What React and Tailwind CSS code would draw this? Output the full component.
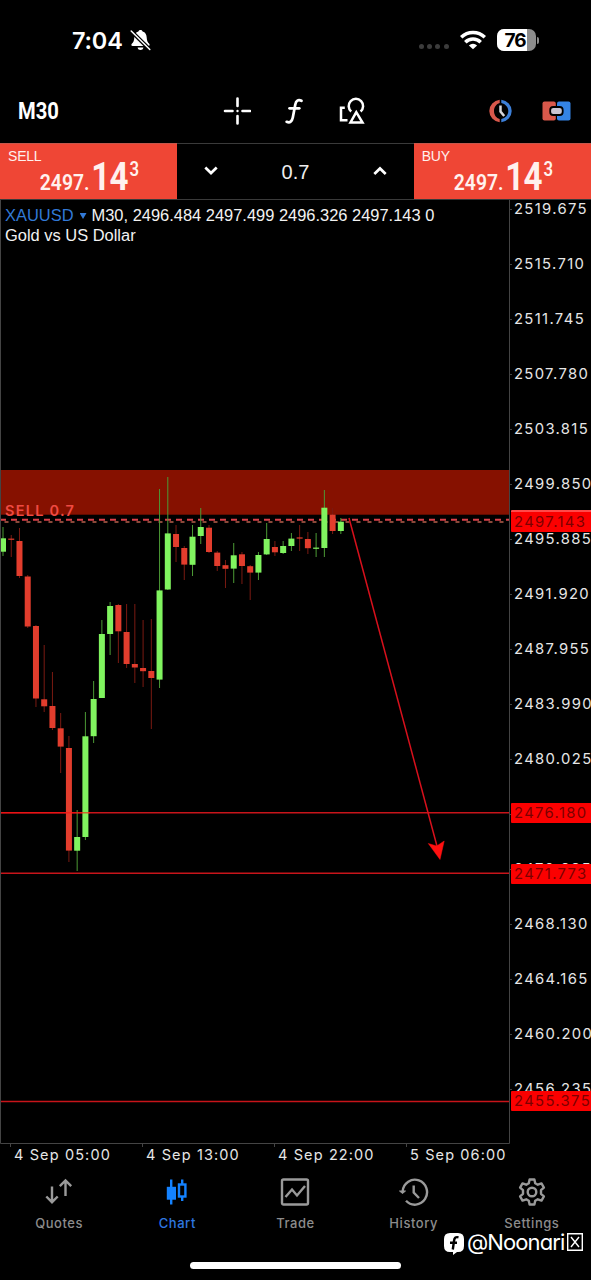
import React from 'react';

// the 2476.060 step is left blank, the 2476.180 tag sits right on it
const PRICES = [
    '2519.675', '2515.710', '2511.745', '2507.780', '2503.815', '2499.850', '2495.885', '2491.920', '2487.955',
    '2483.990', '2480.025', '', '2472.095', '2468.130', '2464.165', '2460.200', '2456.235',
];

const TIMES = ['4 Sep 05:00', '4 Sep 13:00', '4 Sep 22:00', '5 Sep 06:00'];

// [up, body top, body bottom, high, low] in chart pixels, counted from the top of the screen
const CANDLES = [
    [1, 538.3, 551.7, 527, 556], [0, 538.6, 539.8, 535, 557], [0, 541, 576, 528, 578], [0, 576.5, 626.5, 575, 628],
    [0, 626, 698.5, 625, 707], [0, 699.3, 706.3, 645, 712], [0, 706, 728, 672, 730], [0, 728.3, 746.6, 713, 773],
    [0, 748, 850.6, 736, 862], [1, 837, 850.7, 810, 871], [1, 736.3, 837, 712, 840], [1, 699, 736.2, 681, 743],
    [1, 634, 698, 620, 698], [1, 606, 634, 602, 655], [0, 605, 631.3, 604, 663], [0, 632, 664, 604, 668],
    [0, 664, 667.5, 604, 683], [0, 668, 671.2, 620, 687], [0, 671, 678, 619, 729], [1, 590.4, 679.6, 489, 688],
    [1, 533.4, 589.5, 477, 590], [0, 534, 547, 525, 562], [0, 548, 564.6, 546, 580], [1, 536.7, 564.8, 525, 576],
    [1, 527, 536, 508, 544], [0, 527.7, 552, 525, 553], [0, 552.6, 566, 551, 571], [0, 565.2, 568.8, 560, 588],
    [1, 555.3, 568.6, 543, 583], [0, 554.3, 566, 552, 584], [0, 566.2, 572.6, 565, 600], [1, 555, 572.6, 552, 580],
    [1, 539, 554.4, 523, 555], [0, 547, 552.3, 541, 556], [1, 546, 553, 541, 554], [1, 538.6, 546, 533, 551],
    [0, 537.4, 538.6, 525, 551], [0, 539, 548.2, 532, 554], [1, 547.6, 548.8, 533, 557], [1, 507.7, 548, 490, 557],
    [0, 514.6, 531, 508, 534], [1, 521.7, 531, 518, 534],
];

const LEVELS = [812.8, 873.3, 1101.4];

const StatusBar = () => (
    <div className="h-[80px] flex items-center justify-between pl-[72px] pr-[52px] shrink-0">
        <div className="flex items-center gap-[7px]">
            <span className="text-[23.5px] font-semibold tracking-[-0.2px] leading-none mt-[2px]">7:04</span>
            <svg width="21" height="22" viewBox="0 0 21 22" fill="#fff">
                <path d="M10.500 1C9.300 1 8.600 1.700 8.400 2.500C5.600 3.300 4.400 5.500 4.300 8.500C4.200 12 3.200 13.300 1.800 14.800C1 15.800 1.300 17 2.600 17H18.400C19.700 17 20 15.800 19.200 14.800C17.800 13.300 16.800 12 16.700 8.500C16.600 5.500 15.400 3.300 12.600 2.500C12.400 1.700 11.700 1 10.500 1Z" />
                <path d="M7.600 18.500H13.400C13 20.300 12 21 10.500 21S8 20.300 7.600 18.500Z" />
                <path d="M1 2L20 20.700" stroke="#000" strokeWidth="4" />
                <path d="M1.200 2L19.800 20.500" stroke="#fff" strokeWidth="1.500" strokeLinecap="round" />
            </svg>
        </div>
        <div className="flex items-center">
            <div className="flex gap-[3.200px] mt-[13px] mr-[11px]">
                {[0, 1, 2, 3].map(i => <i key={i} className="w-[5px] h-[5px] rounded-full bg-[#3c3c3c]" />)}
            </div>
            <svg width="26" height="20" viewBox="0 0 26 20" fill="none" stroke="#fff" strokeWidth="3.500">
                <path d="M1.200 7.300A17 17 0 0 1 24.800 7.300" />
                <path d="M5.300 12.200A11 11 0 0 1 20.700 12.200" />
                <path d="M13 19.300L8.900 15.400A6 6 0 0 1 17.100 15.400Z" fill="#fff" stroke="none" />
            </svg>
            <div className="ml-[11px] w-[39px] h-[22px] rounded-[7px] overflow-hidden bg-[#8c8c8c] flex">
                <div className="w-[30px] bg-white text-black text-[19px] font-bold leading-[23px] pl-[8px] tracking-[-1px] whitespace-nowrap">76</div>
            </div>
            <div className="ml-[1.500px] w-[2px] h-[7px] rounded-r-full bg-[#8c8c8c]" />
        </div>
    </div>
);

const Toolbar = () => (
    <div className="h-[62px] flex items-center pl-[18px] pr-[20px] shrink-0">
        <div className="w-[205px] pt-[2px]">
            <span className="inline-block origin-left scale-x-[0.860] font-['Roboto'] font-bold text-[23.500px] leading-none">M30</span>
        </div>
        <svg width="28" height="28" viewBox="0 0 28 28" stroke="#fff" strokeWidth="2.600" strokeLinecap="round">
            <path d="M14.500 1.500V9M14.500 19V26.500M2 14H9.500M19.500 14H27" />
            <circle cx="14.500" cy="14" r="1.200" fill="#fff" stroke="none" />
        </svg>
        <svg className="ml-[33px]" width="20" height="28" viewBox="0 0 20 28" fill="none" stroke="#fff" strokeWidth="2.700" strokeLinecap="round">
            <path d="M17.500 3.800C14.200 2.200 12 3.700 11.300 7.500L8.800 20.500C8 24.600 6 26.200 2.600 24.800" />
            <path d="M5.500 11.300H15.300" />
        </svg>
        <svg className="ml-[34px]" width="28" height="28" viewBox="0 0 28 28" fill="none" stroke="#fff" strokeWidth="2.500">
            <path d="M6.800 10.800H3V23.300H9.500" />
            <path d="M13.200 14.500A7.200 7.200 0 1 1 22.600 14.500" />
            <path d="M18.300 15.200L12.500 25.500H24.500Z" />
        </svg>
        <svg className="ml-auto" width="30" height="26" viewBox="0 0 30 26" fill="none">
            <path d="M13.700 1.800A12 11.300 0 0 0 13.700 24.200V21C10.300 20 8 17 8 13S10.300 6 13.700 5Z" fill="#d9584b" />
            <path d="M15.300 1.800A12 11.300 0 0 1 15.300 24.200V21C19.500 20 22.300 17 22.300 13S19.500 6 15.300 5Z" fill="#3c7fd8" />
            <path d="M14.500 7.500V13.500L18.200 18" stroke="#d8d8dc" strokeWidth="2.500" />
        </svg>
        <svg className="ml-[26px]" width="29" height="20" viewBox="0 0 29 20">
            <rect x="0.500" y="0.500" width="13.300" height="19" rx="2" fill="#d9584b" />
            <rect x="15" y="0.500" width="13.500" height="19" rx="2" fill="#3484e6" />
            <rect x="8.200" y="6" width="12.500" height="8" rx="3" fill="#c9c5d2" stroke="#000" strokeWidth="1.800" />
        </svg>
    </div>
);

const PriceButton = ({ label }) => (
    <div className="w-[177.300px] h-[56px] bg-[#ef4635] border-t border-[#c5574b] pl-[8px] text-[#fff1ee]">
        <div className="text-[14px] leading-[16px] pt-[4px] font-['Liberation_Sans'] tracking-[-0.200px]">{label}</div>
        <div className="pl-[37px] h-[34px] flex items-baseline origin-left scale-x-[0.860] font-['Roboto'] leading-[30px] -mt-[2px] whitespace-nowrap">
            <span className="text-[22.500px] font-semibold">2497.</span>
            <span className="text-[38.500px] font-bold tracking-[-0.800px] ml-[2px]">14</span>
            <span className="text-[19.500px] font-semibold relative -top-[14px] ml-[2px]">3</span>
        </div>
    </div>
);

const TradePanel = () => (
    <div className="h-[58px] flex pt-px border-b border-[#3a3a3a] shrink-0">
        <PriceButton label="SELL" />
        <div className="flex-1 h-[56px] border-t border-[#3a3a3a] flex items-center justify-between px-[27px]">
            <svg width="14" height="10" viewBox="0 0 14 10" fill="none" stroke="#fff" strokeWidth="2.700" className="-mt-[2px]"><path d="M1.300 1.500L7 7L12.700 1.500" /></svg>
            <span className="font-['Liberation_Sans'] text-[20px] text-[#eee]">0.7</span>
            <svg width="14" height="10" viewBox="0 0 14 10" fill="none" stroke="#fff" strokeWidth="2.700" className="-mt-[2px]"><path d="M1.300 8L7 2.500L12.700 8" /></svg>
        </div>
        <PriceButton label="BUY" />
    </div>
);

const Drawing = () => (
    <svg className="block" width="510" height="944" viewBox="0 200 510 944">
        <rect x="0" y="470" width="509" height="44.700" fill="#861100" />
        {LEVELS.map(y => <path key={y} d={`M0 ${y}H509`} stroke="#c8141a" strokeWidth="1.500" />)}
        <path d="M0 519.800H509" stroke="#d9404a" strokeWidth="2" strokeDasharray="6 5" />
        <path d="M4.500 521.900H509" stroke="#b8604c" strokeWidth="1.500" strokeDasharray="4 7" />
        {CANDLES.map(([up, top, bottom, high, low], i) => {
            const x = 3 + i * 8.24;
            return (
                <g key={i}>
                    <path d={`M${x} ${high}V${low}`} stroke={up ? '#4c9a35' : '#7a1a12'} strokeWidth="1" />
                    <rect x={x - 3} y={top} width="6" height={bottom - top} fill={up ? '#80f45f' : '#e23d2d'} />
                </g>
            );
        })}
        <path d="M0 812.800H90" stroke="#ff1010" strokeOpacity="0.600" strokeWidth="1.500" />
        <path d="M349 518L437.500 848" stroke="#d8101c" strokeWidth="1.500" />
        <path d="M428.300 843.500L436.700 846L444.200 841L440 859.500Z" fill="#ff1010" stroke="#ff1010" strokeWidth="0.500" />
        <path d="M0.500 200V1143.500H509.500V200" fill="none" stroke="#444" />
    </svg>
);

const PriceTag = ({ className, children }) => (
    <div className={`absolute left-[1px] right-0 bg-[#fb0000] rounded-[1px] pl-[3px] leading-[20px] text-[#7c0000] ${className}`}>{children}</div>
);

const ChartArea = () => (
    <div className="h-[944px] flex shrink-0 overflow-hidden">
        <div className="relative w-[510px] shrink-0">
            <Drawing />
            <div className="absolute top-[5px] left-[5px] font-['Liberation_Sans'] text-[16.450px] leading-[20px] text-[#f2f2f2] whitespace-nowrap">
                <div>
                    <span className="text-[#3279d6]">XAUUSD</span>
                    <span className="inline-block w-[7px] h-[6px] ml-[6px] mr-[5px] mb-[2px] bg-[#3279d6] [clip-path:polygon(0_0,100%_0,50%_100%)]" />
                    M30, 2496.484 2497.499 2496.326 2497.143 0
                </div>
                <div>Gold vs US Dollar</div>
            </div>
            <div className="absolute top-[302px] left-[5px] text-[14.500px] leading-[18px] tracking-[1.250px] font-semibold text-[#f04a42]">SELL 0.7</div>
        </div>
        <div className="relative flex-1 text-[14.800px] tracking-[1.350px] whitespace-nowrap text-[#e6e6e6]">
            {PRICES.map((price, i) => (
                <div key={i} className="flex items-center h-[18px] mb-[37px]">
                    <i className="w-[2px] h-px bg-[#444] mr-[2px]" />
                    {price}
                </div>
            ))}
            <PriceTag className="top-[310px] h-[22px] border-t-2 border-[#ff4a4a]">2497.143</PriceTag>
            <PriceTag className="top-[603px] h-[20px]">2476.180</PriceTag>
            <PriceTag className="top-[664px] h-[20px]">2471.773</PriceTag>
            <PriceTag className="top-[891px] h-[20px]">2455.375</PriceTag>
        </div>
    </div>
);

const TimeAxis = () => (
    <div className="h-[26px] pl-[10px] flex shrink-0">
        {TIMES.map(t => (
            <div key={t} className="w-[132px] shrink-0 text-[14.500px] leading-[22px] tracking-[1.120px] text-[#e6e6e6] whitespace-nowrap flex">
                <i className="w-px h-[3px] bg-[#444] mr-[3px]" />
                {t}
            </div>
        ))}
    </div>
);

const TABS = [
    { label: 'Quotes', icon: <path d="M8 8.500V24M2.300 18.500L8 24.200L13.700 18.500M21.500 18V2.500M15.800 8.200L21.500 2.500L27.200 8.200" /> },
    {
        label: 'Chart', active: true,
        icon: (
            <>
                <path d="M9.200 1.500V26.500M20.200 1.500V6.500M20.200 18.500V23" />
                <rect x="6" y="10" width="6.800" height="10.500" fill="#1482ff" />
                <rect x="17" y="6.500" width="6.400" height="12" />
            </>
        ),
    },
    { label: 'Trade', icon: <><rect x="2" y="1.500" width="26" height="25" rx="1.500" /><path d="M5.500 19L12 11.500L17 17.500L25 8" /></> },
    {
        label: 'History',
        icon: <><path d="M3.700 13A12.200 12.500 0 1 1 7 22.800" /><path d="M0.500 13H6.500L3.500 15.500Z" fill="#9a9a9a" strokeWidth="1" /><path d="M14.700 7.500V14.500L20 20" /></>,
    },
    {
        label: 'Settings',
        icon: (
            <>
                <path strokeLinejoin="round" d="M12.600 1.500H17.400L18.200 5.200L20.800 6.700L24.500 5.400L26.900 9.600L24 12.200V15.800L26.900 18.400L24.500 22.600L20.800 21.300L18.200 22.800L17.400 26.500H12.600L11.800 22.800L9.200 21.300L5.500 22.600L3.100 18.400L6 15.800V12.200L3.100 9.600L5.500 5.400L9.200 6.700L11.800 5.200Z" />
                <circle cx="15" cy="14" r="4.300" />
            </>
        ),
    },
];

const TabBar = () => (
    <div className="relative flex-1 grid grid-cols-5 pt-[8px]">
        {TABS.map(({ label, icon, active }) => (
            <div key={label} className={`flex flex-col items-center text-[13px] font-medium tracking-[0.550px] ${active ? 'text-[#2f78e0]' : 'text-[#8c8c8c]'}`}>
                <svg width="30" height="28" viewBox="0 0 30 28" fill="none" stroke={active ? '#1482ff' : '#9a9a9a'} strokeWidth="2.400">{icon}</svg>
                <span className="leading-[16px] mt-[9px]">{label}</span>
            </div>
        ))}
        <div className="absolute left-[190px] bottom-[11px] w-[211px] h-[7px] rounded-full bg-white" />
        <div className="absolute left-[444px] bottom-[24px] flex items-center text-white">
            <svg width="20" height="22" viewBox="0 0 20 22" className="mt-[3px]">
                <path d="M6 0H14Q20 0 20 6V13Q20 19 14 19H13L9 22V19H6Q0 19 0 13V6Q0 0 6 0Z" fill="#fff" />
                <path d="M14.500 4.300C11.500 3.500 10.400 5 10 8L8.800 16.500M6 9.800H13" fill="none" stroke="#000" strokeWidth="2.400" />
            </svg>
            <span className="ml-[3px] text-[22px] leading-[28px] tracking-[-0.900px] [font-feature-settings:'cv11']">@Noonari</span>
            <svg className="ml-[3px]" width="16" height="18" viewBox="0 0 16 18" fill="none" stroke="#fff" strokeWidth="1.400">
                <path d="M0.700 0.700H15.300V17.300H0.700ZM4 4L12 14M12 4L4 14" />
            </svg>
        </div>
    </div>
);

const App = () => (
    <div className="w-[591px] h-[1280px] bg-black text-white overflow-hidden flex flex-col font-['Inter',sans-serif]">
        <StatusBar />
        <Toolbar />
        <TradePanel />
        <ChartArea />
        <TimeAxis />
        <TabBar />
    </div>
);

export default App;
